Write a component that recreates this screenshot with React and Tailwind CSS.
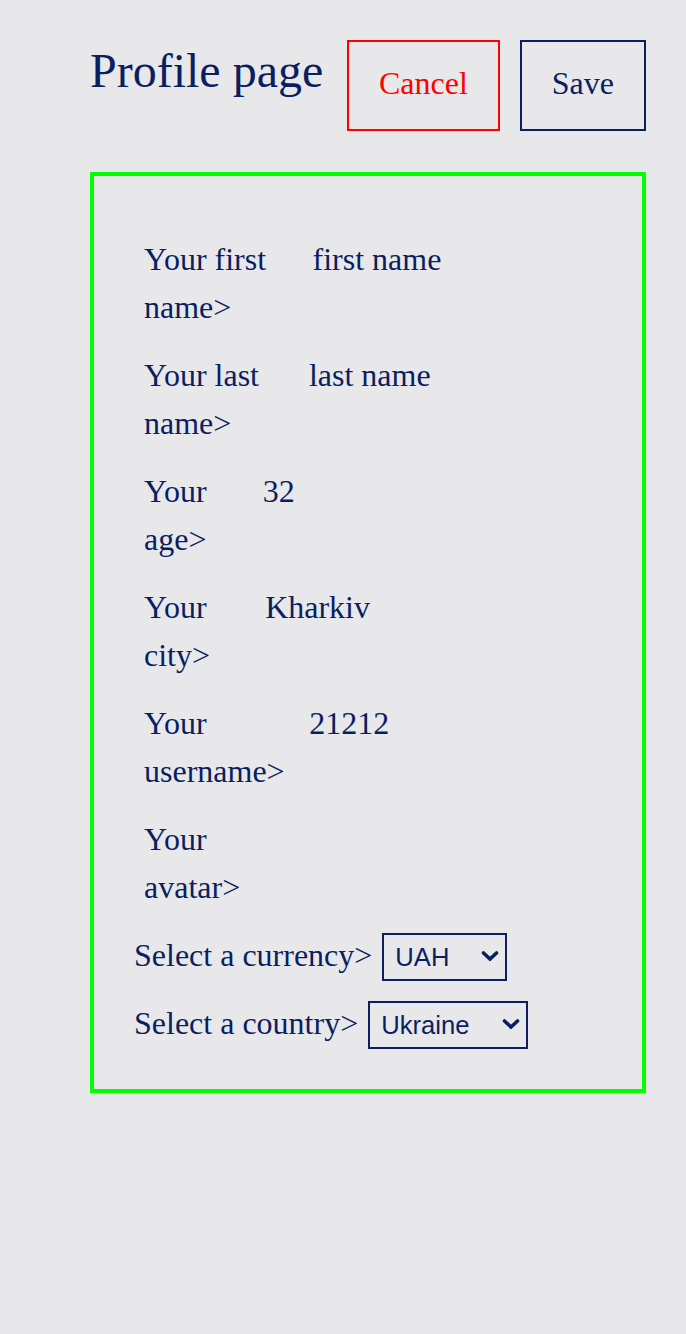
import React from 'react';

const FIELDS = [
  { label: 'Your first name>', value: 'first name' },
  { label: 'Your last name>', value: 'last name' },
  { label: 'Your age>', value: '32' },
  { label: 'Your city>', value: 'Kharkiv' },
  { label: 'Your username>', value: '21212' },
  { label: 'Your avatar>', value: '' },
];

function Field({ label, value }) {
  return (
    <div className="flex items-start pl-[10px]">
      <span className="leading-[48px]">{label}</span>
      <span className="min-w-0 basis-[425px] shrink whitespace-nowrap leading-[48px]">{value}</span>
    </div>
  );
}

function Chevron() {
  return (
    <svg
      width="18"
      height="11"
      viewBox="0 0 18 11"
      className="pointer-events-none absolute right-[8px] top-1/2 -translate-y-1/2"
    >
      <path d="M2.5 2.5 L9 8.5 L15.5 2.5" fill="none" stroke="currentColor" strokeWidth="3.6" strokeLinecap="round" strokeLinejoin="miter" />
    </svg>
  );
}

function SelectRow({ label, width, options }) {
  return (
    <div className="flex items-baseline gap-[10px]">
      <span className="leading-[48px]">{label}</span>
      <div className={`relative inline-block ${width}`}>
        <select
          defaultValue={options[0]}
          className="w-full appearance-none border-2 border-[#0b1f60] py-[7px] pl-[11px] pr-[30px] font-['Liberation_Sans',Arial,sans-serif] text-[25.6px] leading-[30px] text-[#0b1f60]"
        >
          {options.map((o) => (
            <option key={o}>{o}</option>
          ))}
        </select>
        <Chevron />
      </div>
    </div>
  );
}

export default function App() {
  return (
    <div className="min-h-[1334px] bg-[#e8e8eb] pl-[90px] pr-[40px] pt-[40px] font-['Liberation_Serif',serif] text-[32px] text-[#0b1f60]">
      <header className="flex items-start justify-between">
        <h1 className="mt-[3px] text-[48px] leading-[55px]">Profile page</h1>
        <div className="flex gap-[20px]">
          <button className="border-2 border-[#ff0000] px-[30px] pt-[23px] pb-[27px] leading-[37px] text-[#ff0000]">
            Cancel
          </button>
          <button className="border-2 border-[#0b1f60] px-[30px] pt-[23px] pb-[27px] leading-[37px]">
            Save
          </button>
        </div>
      </header>

      <form className="mt-[41px] flex flex-col gap-[20px] border-4 border-[#00ff00] pt-[59px] pb-[40px] pl-[40px]">
        <div className="flex flex-col gap-[20px]">
          {FIELDS.map((f) => (
            <Field key={f.label} {...f} />
          ))}
        </div>
        <div className="flex flex-col gap-[18px]">
          <SelectRow label="Select a currency>" width="w-[125px]" options={['UAH', 'USD', 'EUR']} />
          <SelectRow label="Select a country>" width="w-[160px]" options={['Ukraine', 'Poland']} />
        </div>
      </form>
    </div>
  );
}
